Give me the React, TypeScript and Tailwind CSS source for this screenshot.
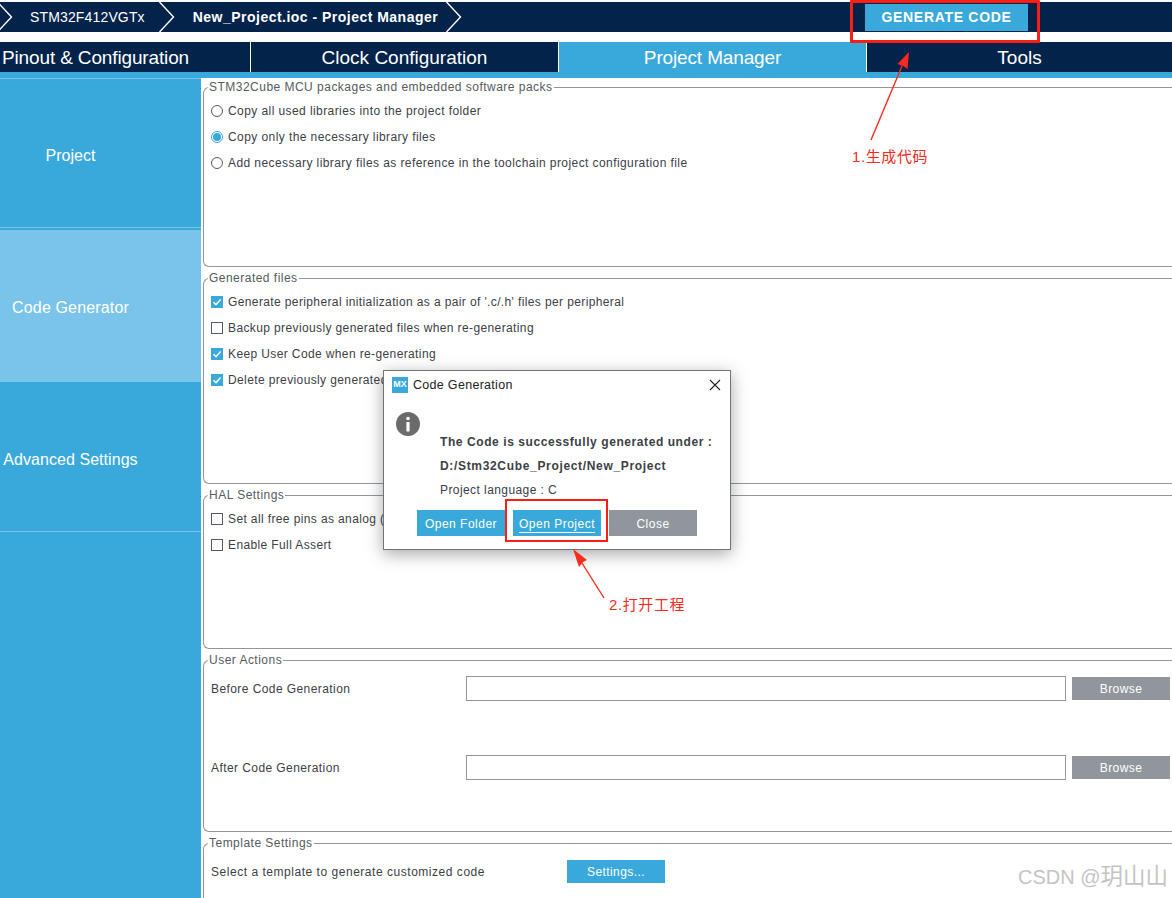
import type { ReactNode } from "react";

function Chevron() {
  return (
    <svg width="16" height="30" viewBox="0 0 16 30" className="shrink-0">
      <path d="M0.5 0L14.5 15L0.5 30" fill="none" stroke="#ffffff" strokeWidth="1.4" />
    </svg>
  );
}

function Radio({ checked, label }: { checked?: boolean; label: string }) {
  return (
    <div className="flex items-center h-5 gap-[5px]">
      <span className={`w-3 h-3 rounded-full border flex items-center justify-center ${checked ? "border-[#39a9dc]" : "border-[#555b60]"}`}>
        {checked && <span className="w-2 h-2 rounded-full bg-[#39a9dc]" />}
      </span>
      <span className="text-[12px] tracking-[0.42px]">{label}</span>
    </div>
  );
}

function Check({ checked, label }: { checked?: boolean; label: string }) {
  return (
    <div className="flex items-center h-5 gap-[5px]">
      {checked ? (
        <svg width="12" height="12" viewBox="0 0 12 12" className="shrink-0">
          <rect width="12" height="12" fill="#39a9dc" />
          <path d="M2.5 6.2L5 8.7L9.6 3.4" fill="none" stroke="#ffffff" strokeWidth="1.5" />
        </svg>
      ) : (
        <span className="w-3 h-3 border border-[#555b60]" />
      )}
      <span className="text-[12px] tracking-[0.38px] whitespace-nowrap">{label}</span>
    </div>
  );
}

function Group({ title, className, children }: { title: string; className: string; children: ReactNode }) {
  return (
    <fieldset className={`border border-r-0 border-[#90969c] rounded-l-[6px] pl-[7px] ${className}`}>
      <legend className="text-[12px] leading-[14px] tracking-[0.48px] text-[#555b60] whitespace-nowrap ml-[-3px] pl-[1px] pr-[1px]">{title}</legend>
      {children}
    </fieldset>
  );
}

function Tab({ label, className }: { label: string; className: string }) {
  return <div className={`flex items-center h-full pt-[2px] text-[19px] text-white whitespace-nowrap ${className}`}>{label}</div>;
}

function PathRow({ label, className }: { label: string; className: string }) {
  return (
    <div className={`flex items-center h-[25px] ${className}`}>
      <span className="w-[255px] text-[12px] tracking-[0.42px]">{label}</span>
      <div className="w-[600px] h-[25px] border border-[#90969c]" />
      <button className="ml-[6px] w-[98px] h-[23px] bg-[#90969c] text-white text-[12px] tracking-[0.42px]">Browse</button>
    </div>
  );
}

function DialogButton({ label, gray, focus }: { label: string; gray?: boolean; focus?: boolean }) {
  return (
    <button className={`w-[88px] h-[26px] pt-[1px] text-white text-[12px] tracking-[0.5px] ${gray ? "bg-[#90969c]" : "bg-[#39a9dc]"}`}>
      <span className={focus ? "border-b border-white pb-[1px]" : ""}>{label}</span>
    </button>
  );
}

export default function App() {
  return (
    <div className="relative w-[1172px] h-[898px] overflow-hidden bg-white text-[#3c4146] font-['Liberation_Sans','Noto_Sans_CJK_SC',sans-serif]">
      <header className="mt-[2px] h-[30px] bg-[#03234b] flex items-center text-white">
        <div className="ml-[-3px]"><Chevron /></div>
        <span className="ml-[17px] text-[14px] tracking-[0.15px]">STM32F412VGTx</span>
        <div className="ml-[14px]"><Chevron /></div>
        <span className="ml-[18px] text-[14px] font-bold tracking-[0.48px]">New_Project.ioc - Project Manager</span>
        <div className="ml-[8px]"><Chevron /></div>
        <button className="ml-auto mr-[144px] w-[163px] h-[27px] bg-[#39a9dc] text-white text-[14px] font-bold tracking-[0.7px]">GENERATE CODE</button>
      </header>

      <nav className="mt-[10px] h-[30px] flex bg-[#03234b]">
        <Tab label="Pinout & Configuration" className="w-[251px] pl-[2px] border-r border-white tracking-[-0.14px]" />
        <Tab label="Clock Configuration" className="w-[308px] justify-center border-r border-white" />
        <Tab label="Project Manager" className="w-[308px] justify-center bg-[#39a9dc] border-r border-white tracking-[-0.14px]" />
        <Tab label="Tools" className="flex-1 justify-center" />
      </nav>
      <div className="h-[6px] bg-[#39a9dc]" />

      <div className="flex h-[820px]">
        <aside className="w-[201px] shrink-0 bg-[#39a9dc] text-white text-[16px] flex flex-col">
          <div className="h-[150px] border-t border-[#7ac4e9] border-b flex items-center justify-center pr-[60px] pt-[5px]">Project</div>
          <div className="mt-[2px] h-[152px] bg-[#7ac4e9] flex items-center justify-center pr-[60px] pt-[4px] tracking-[0.15px]">Code Generator</div>
          <div className="h-[150px] border-b border-[#7ac4e9] flex items-center justify-center pr-[60px] pt-[7px] tracking-[0.05px] whitespace-nowrap">Advanced Settings</div>
        </aside>

        <main className="ml-[2px] flex-1 pt-[2px] flex flex-col gap-[4px] min-w-0">
          <Group title="STM32Cube MCU packages and embedded software packs" className="h-[187px] shrink-0">
            <div className="pt-[7px] flex flex-col gap-[6px]">
              <Radio label="Copy all used libraries into the project folder" />
              <Radio checked label="Copy only the necessary library files" />
              <Radio label="Add necessary library files as reference in the toolchain project configuration file" />
            </div>
          </Group>
          <Group title="Generated files" className="h-[213px] shrink-0">
            <div className="pt-[7px] flex flex-col gap-[6px]">
              <Check checked label="Generate peripheral initialization as a pair of '.c/.h' files per peripheral" />
              <Check label="Backup previously generated files when re-generating" />
              <Check checked label="Keep User Code when re-generating" />
              <Check checked label="Delete previously generated" />
            </div>
          </Group>
          <Group title="HAL Settings" className="h-[161px] shrink-0">
            <div className="pt-[7px] flex flex-col gap-[6px]">
              <Check label="Set all free pins as analog (" />
              <Check label="Enable Full Assert" />
            </div>
          </Group>
          <Group title="User Actions" className="h-[179px] shrink-0">
            <PathRow label="Before Code Generation" className="mt-[9px]" />
            <PathRow label="After Code Generation" className="mt-[54px]" />
          </Group>
          <Group title="Template Settings" className="h-[80px] shrink-0">
            <div className="flex items-center h-[23px] mt-[10px]">
              <span className="w-[356px] text-[12px] tracking-[0.53px] whitespace-nowrap">Select a template to generate customized code</span>
              <button className="w-[98px] h-[23px] bg-[#39a9dc] text-white text-[12px] tracking-[0.42px]">Settings...</button>
            </div>
          </Group>
        </main>
      </div>

      {/* dialog */}
      <div className="absolute left-[383px] top-[370px] w-[348px] h-[180px] bg-white border border-[#70757a] shadow-[0_4px_16px_rgba(0,0,0,0.35)]">
        <div className="flex items-center h-[28px] pl-[8px] pr-[8px]">
          <span className="w-4 h-4 bg-[#39a9dc] text-white text-[9px] font-bold flex items-center justify-center">MX</span>
          <span className="ml-[5px] text-[12.5px] tracking-[0.3px] text-[#222]">Code Generation</span>
          <svg width="12" height="12" viewBox="0 0 12 12" className="ml-auto mr-[1px]">
            <path d="M1 1L11 11M11 1L1 11" stroke="#222" strokeWidth="1.1" />
          </svg>
        </div>
        <div className="flex pl-[12px] mt-[13px]">
          <svg width="24" height="24" viewBox="0 0 24 24" className="shrink-0">
            <circle cx="12" cy="12" r="12" fill="#6b6b6b" />
            <circle cx="12" cy="6.5" r="1.8" fill="#ffffff" />
            <rect x="10.4" y="10" width="3.2" height="9.5" fill="#ffffff" />
          </svg>
          <div className="ml-[20px] mt-[18px] text-[12px] leading-[24px] tracking-[0.42px]">
            <p className="font-bold whitespace-nowrap tracking-[0.58px]">The Code is successfully generated under :</p>
            <p className="font-bold tracking-[0.67px]">D:/Stm32Cube_Project/New_Project</p>
            <p>Project language : C</p>
          </div>
        </div>
        <div className="flex gap-2 pl-[33px] mt-[8px]">
          <DialogButton label="Open Folder" />
          <DialogButton label="Open Project" focus />
          <DialogButton label="Close" gray />
        </div>
      </div>

      {/* annotations */}
      <div className="absolute left-[850px] top-0 w-[190px] h-[43px] border-[3px] border-[#fa1e14] rounded-[1px]" />
      <div className="absolute left-[505px] top-[499px] w-[103px] h-[43px] border-2 border-[#fa1e14]" />
      <svg width="1172" height="898" viewBox="0 0 1172 898" className="absolute left-0 top-0 pointer-events-none">
        <path d="M871 140L902 66" stroke="#fa2a1e" strokeWidth="1.4" fill="none" />
        <path d="M909 52L907.5 69L904 66.5L897.5 64Z" fill="#fa2a1e" />
        <path d="M604 598L582 563" stroke="#fa2a1e" strokeWidth="1.4" fill="none" />
        <path d="M573 549L587 560L583 562L579 567Z" fill="#fa2a1e" />
      </svg>
      <span className="absolute left-[852px] top-[148px] text-[15px] leading-[18px] text-[#fa2a1e] tracking-[0.6px] whitespace-nowrap">1.生成代码</span>
      <span className="absolute left-[609px] top-[596px] text-[15px] leading-[18px] text-[#fa2a1e] tracking-[0.6px] whitespace-nowrap">2.打开工程</span>
      <span className="absolute left-[1018px] top-[865px] text-[20px] leading-[24px] text-[#c4c4c4] whitespace-nowrap">CSDN @<span className="text-[22.5px]">玥山山</span></span>
    </div>
  );
}
